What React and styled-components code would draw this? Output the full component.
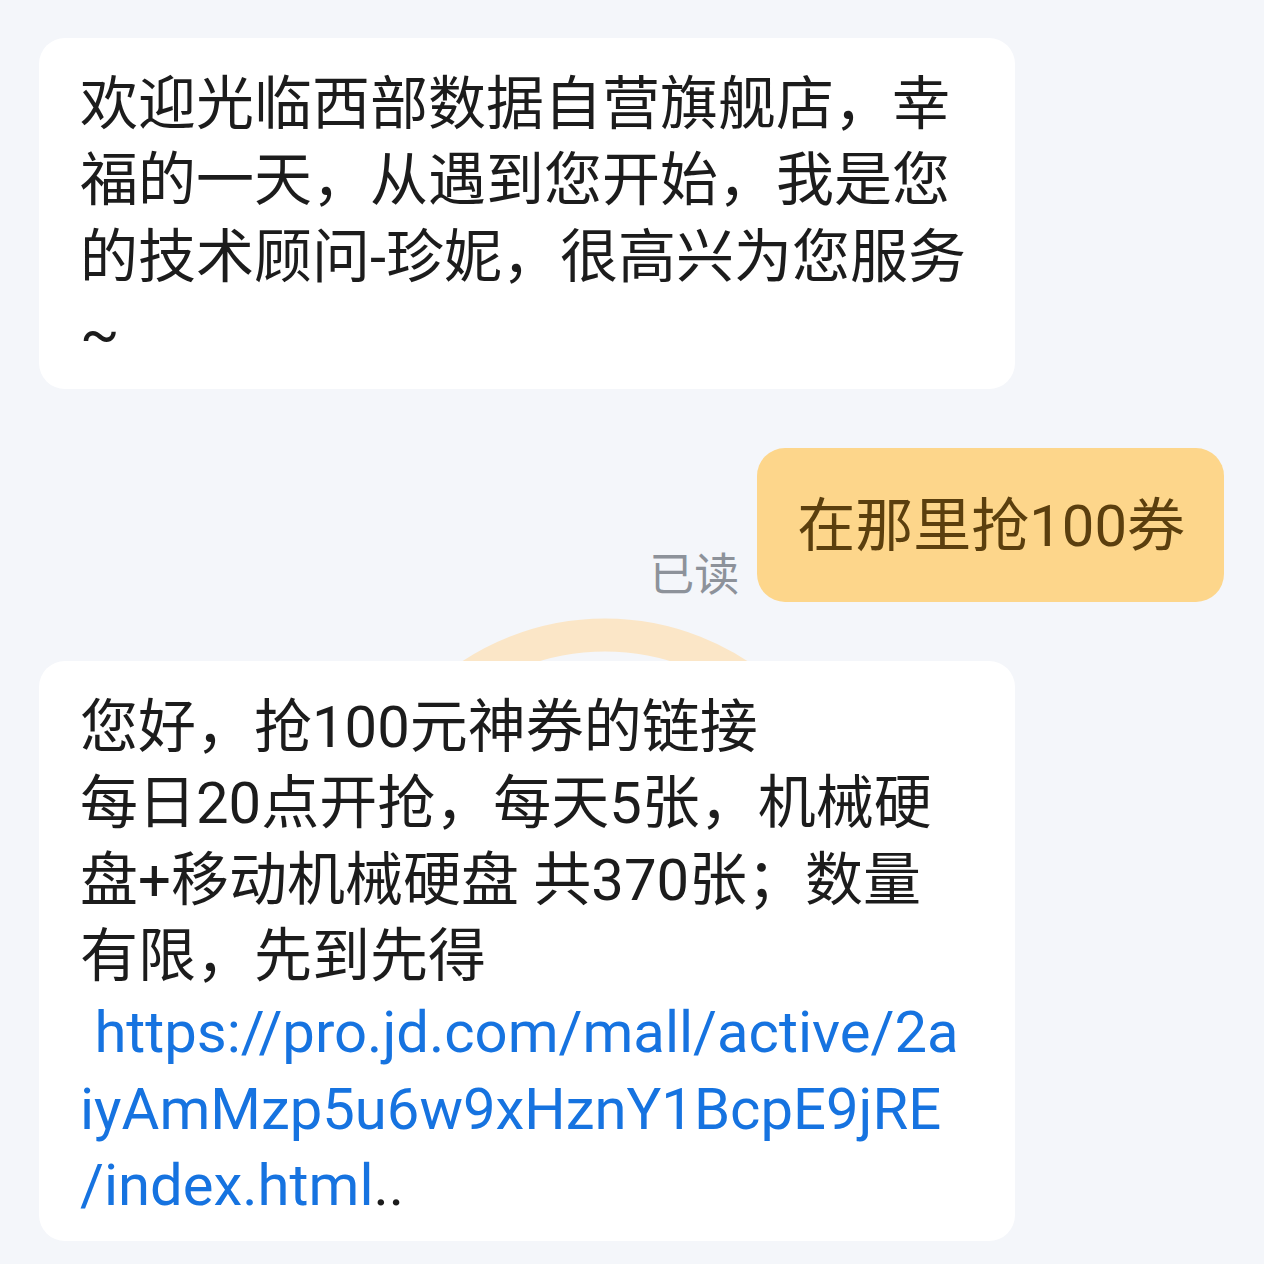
import React from "react";
import styled, { createGlobalStyle } from "styled-components";

const Global = createGlobalStyle`
  html, body { margin: 0; padding: 0; background: #f4f6fa; }
  * { box-sizing: border-box; }
`;

const Page = styled.div`
  position: relative;
  width: 1264px;
  min-height: 1264px;
  background: #f4f6fa;
  padding: 38px 40px 0 39px;
  display: flex;
  flex-direction: column;
  gap: 59px;
  font-family: Roboto, "Noto Sans CJK SC", sans-serif;
  overflow: hidden;
`;

const Watermark = styled.svg`
  position: absolute;
  left: 305px;
  top: 600px;
  width: 600px;
  height: 600px;
  z-index: 0;
`;

const Row = styled.div`
  position: relative;
  z-index: 1;
  display: flex;
  align-items: flex-end;
  justify-content: ${(p) => (p.$mine ? "flex-end" : "flex-start")};
  gap: 18px;
`;

const Bubble = styled.div`
  width: 976px;
  background: #ffffff;
  border-radius: 26px;
  padding: 28px 40px 18px 41px;
  font-size: 58px;
  line-height: 76.3px;
  color: #1c1c1c;
  white-space: pre-wrap;
  word-break: break-all;
`;

const MineBubble = styled.div`
  background: #fdd68b;
  border-radius: 28px;
  padding: 40px 39px 38px 40px;
  font-size: 58px;
  line-height: 76px;
  color: #5b3f0e;
  white-space: nowrap;
`;

const ReadMark = styled.span`
  font-size: 45px;
  line-height: 45px;
  color: #8d929a;
  margin-bottom: 4px;
`;

const Link = styled.span`
  color: #1673e0;
`;

export default function App() {
  return (
    <>
      <Global />
      <Page>
        <Watermark viewBox="0 0 600 600">
          <circle cx="300" cy="278" r="243" fill="none" stroke="#fbe6c7" strokeWidth="33" />
        </Watermark>
        <Row>
          <Bubble>
            {"欢迎光临西部数据自营旗舰店，幸\n福的一天，从遇到您开始，我是您\n的技术顾问-珍妮，很高兴为您服务\n~"}
          </Bubble>
        </Row>
        <Row $mine>
          <ReadMark>已读</ReadMark>
          <MineBubble>在那里抢100券</MineBubble>
        </Row>
        <Row>
          <Bubble>
            {"您好，抢100元神券的链接\n每日20点开抢，每天5张，机械硬\n盘+移动机械硬盘 共370张；数量\n有限，先到先得\n"}
            <Link>{" https://pro.jd.com/mall/active/2a\niyAmMzp5u6w9xHznY1BcpE9jRE\n/index.html"}</Link>
            {".."}
          </Bubble>
        </Row>
      </Page>
    </>
  );
}
